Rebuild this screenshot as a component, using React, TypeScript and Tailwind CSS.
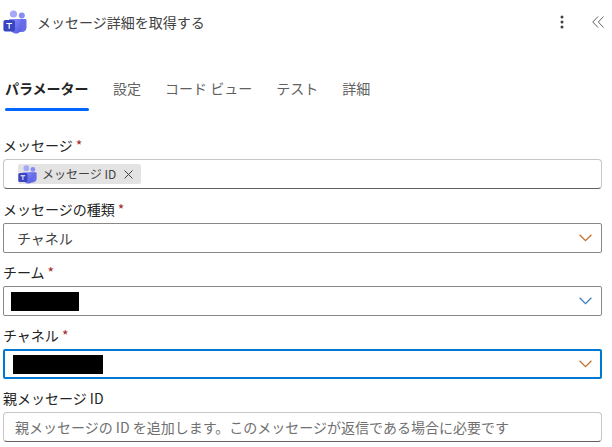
import React from "react";

const font = { fontFamily: '"Noto Sans CJK JP", "Noto Sans", sans-serif' };

function TeamsIcon({ size, id }: { size: number; id: string }) {
  return (
    <svg width={size} height={size} viewBox="0 0 24 24" className="shrink-0">
      <defs>
        <linearGradient id={id} x1="0" y1="0" x2="1" y2="1">
          <stop offset="0" stopColor="#8f95fa" />
          <stop offset="1" stopColor="#5257e0" />
        </linearGradient>
      </defs>
      <circle cx="10.500" cy="4" r="3.600" fill="#a3a8f8" />
      <circle cx="18.800" cy="5.600" r="3" fill="#858cf2" />
      <path d="M15 9h7c.8 0 1.500.7 1.500 1.500v7c0 2.500-2 4.500-4.500 4.500h-4z" fill="#666de6" />
      <path d="M6 9h11c.8 0 1.500.7 1.500 1.500V18c0 3-2.400 5.500-5.500 5.500S7 21 6.600 18z" fill={`url(#${id})`} />
      <rect x="0.400" y="10" width="11.600" height="11.600" rx="2" fill="#3a46c0" />
      <path d="M3.300 13h5.800v1.100H6.800v4.700H5.600v-4.700H3.300z" fill="#fff" />
    </svg>
  );
}

function Chevron({ color }: { color: string }) {
  return (
    <svg width="13" height="8" viewBox="0 0 13 8" fill="none" className="shrink-0">
      <path d="M.6.800l5.900 5.900L12.400.800" stroke={color} strokeWidth="1.300" />
    </svg>
  );
}

function Label({ text, required, cls }: { text: string; required?: boolean; cls: string }) {
  return (
    <div className={`flex h-[27px] items-center pb-[2px] text-[14px] leading-[20px] text-[#242424] ${cls}`}>
      <span>{text}</span>
      {required && <span className="ml-[3px] text-[#a4262c]">*</span>}
    </div>
  );
}

function Select({ children, focused, chevron }: { children?: React.ReactNode; focused?: boolean; chevron: string }) {
  return (
    <div
      className={`flex h-[30px] items-center justify-between rounded-[2px] ${
        focused ? "border-2 border-[#0078d4] pr-[8px]" : "border border-[#8a8886] pr-[9px]"
      }`}
    >
      {children}
      <Chevron color={chevron} />
    </div>
  );
}

export default function App() {
  return (
    <div className="h-[447px] w-[612px] overflow-hidden bg-white" style={font}>
      <header className="flex h-[44px] items-center pl-[3px] pr-[8px]">
        <TeamsIcon size={24} id="teams-a" />
        <h1 className="ml-[10px] flex-1 text-[14px] font-normal text-[#424242]">メッセージ詳細を取得する</h1>
        <svg width="4" height="14" viewBox="0 0 4 14" className="mr-[28px]" fill="#424242">
          <circle cx="2" cy="2" r="1.500" />
          <circle cx="2" cy="7" r="1.500" />
          <circle cx="2" cy="12" r="1.500" />
        </svg>
        <svg width="12" height="12" viewBox="0 0 12 12" fill="none" stroke="#616161" strokeWidth="1">
          <path d="M6 .5L.8 6 6 11.500M11.500 .5L6.300 6l5.200 5.500" />
        </svg>
      </header>

      <nav className="mt-[29px] flex h-[37px] items-start gap-[24px] pl-[5px] text-[14px] leading-[30px] text-[#616161]">
        <div className="relative w-[84px] font-bold text-[#242424]">
          パラメーター
          <div className="absolute left-0 right-0 top-[35px] h-[3px] rounded-[2px] bg-[#0066ff]" />
        </div>
        <div>設定</div>
        <div>コード ビュー</div>
        <div>テスト</div>
        <div>詳細</div>
      </nav>

      <main className="mt-[22px] pl-[3px] pr-[10px]">
        <Label text="メッセージ" required cls="" />
        <div className="flex h-[30px] items-center rounded-[4px] border border-[#c8c6c4] border-b-[#616161] pl-[14px]">
          <div className="flex h-[20px] items-center rounded-[2px] bg-[#e3e3e3] pr-[8px] text-[12px] text-[#424242]">
            <TeamsIcon size={19} id="teams-b" />
            <span className="ml-[5px]">メッセージ ID</span>
            <svg width="9" height="9" viewBox="0 0 9 9" className="ml-[8px]" stroke="#424242" strokeWidth="1">
              <path d="M.5.5l8 8M8.500.5l-8 8" />
            </svg>
          </div>
        </div>

        <Label text="メッセージの種類" required cls="mt-[7px]" />
        <Select chevron="#c1702b">
          <span className="pl-[13px] text-[14px] text-[#424242]">チャネル</span>
        </Select>

        <Label text="チーム" required cls="mt-[6px]" />
        <Select chevron="#3f7fbe">
          <div className="ml-[7px] h-[19px] w-[68px] bg-black" />
        </Select>

        <Label text="チャネル" required cls="mt-[6px]" />
        <Select focused chevron="#c1702b">
          <div className="ml-[8px] h-[19px] w-[90px] bg-black" />
        </Select>

        <Label text="親メッセージ ID" cls="mt-[6px]" />
        <div className="flex h-[30px] items-center rounded-[4px] border border-[#c8c6c4] border-b-[#616161] pl-[11px] text-[14px] text-[#707070]">
          親メッセージの ID を追加します。このメッセージが返信である場合に必要です
        </div>
      </main>
    </div>
  );
}
